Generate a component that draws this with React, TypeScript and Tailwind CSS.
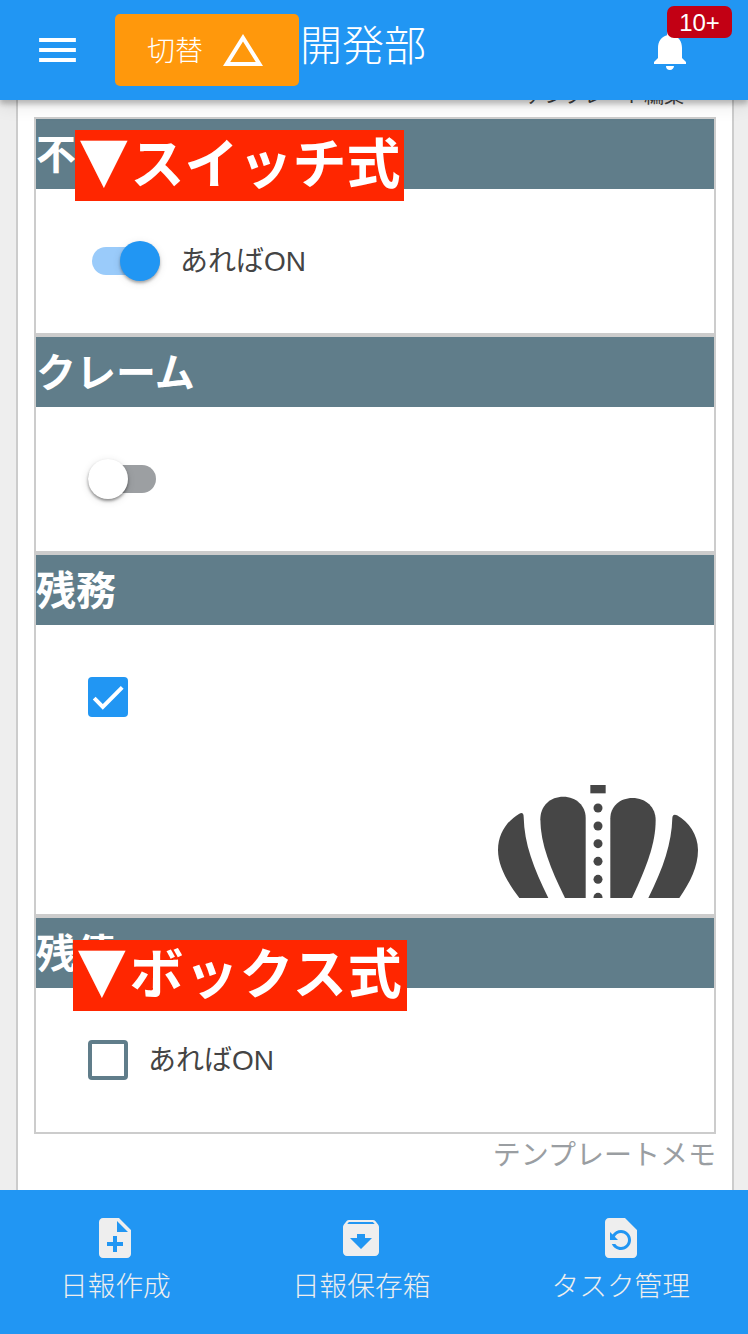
import type { ReactNode } from "react";
import {
  MdArchive,
  MdChangeHistory,
  MdMenu,
  MdNoteAdd,
  MdNotifications,
  MdRestorePage,
} from "react-icons/md";

function Crown() {
  return (
    <svg viewBox="54 45 600 339" className="h-[113px] w-[200px]" fill="#464646">
      <path d="M331 45h46v25h-46z" />
      <circle cx="354" cy="114" r="13.5" />
      <circle cx="354" cy="168" r="13.5" />
      <circle cx="354" cy="221" r="13.5" />
      <circle cx="354" cy="274" r="13.5" />
      <circle cx="354" cy="328" r="13.5" />
      <circle cx="354" cy="382" r="13.5" />
      <path d="M118 384C82 336 54 288 54 240C54 190 83 151 118 131Q131 125 131 141C133 222 160 292 205 384Z" />
      <path d="M255 384C212 298 181 220 181 148C181 107 211 80 250 80C289 80 317 108 317 143V384Z" />
      <path d="M391 384V145C391 110 420 84 457 84C499 84 527 113 527 150C527 220 500 291 456 384Z" />
      <path d="M505 384C551 292 575 220 577 144Q578 131 591 136C626 155 654 194 654 240C654 290 631 336 598 384Z" />
    </svg>
  );
}

function Section({ title, height, children }: { title: string; height: string; children: ReactNode }) {
  return (
    <section>
      <h2 className="h-[70px] bg-[#607d8a] pt-px text-[40px] font-bold leading-[70px] text-white">{title}</h2>
      <div className={`${height} bg-white`}>{children}</div>
    </section>
  );
}

function Toggle({ on }: { on: boolean }) {
  return (
    <span
      className={
        on
          ? "flex h-[28px] w-[68px] items-center justify-end rounded-full bg-[#9acbfa]"
          : "flex h-[28px] w-[68px] items-center justify-start rounded-full bg-[#9c9fa2]"
      }
    >
      <span
        className={
          on
            ? "size-[40px] shrink-0 rounded-full bg-[#2196f3] shadow-[0_2px_3px_rgba(0,0,0,0.3),0_2px_8px_rgba(0,0,0,0.1)]"
            : "size-[40px] shrink-0 rounded-full bg-white shadow-[0_2px_3px_rgba(0,0,0,0.4),0_2px_8px_rgba(0,0,0,0.12)]"
        }
      />
    </span>
  );
}

function NavItem({ icon, label }: { icon: ReactNode; label: string }) {
  return (
    <div className="flex flex-col items-center">
      {icon}
      <span className="mt-[5px] h-10 whitespace-nowrap text-[27.7px] font-light leading-10">{label}</span>
    </div>
  );
}

export default function App() {
  return (
    <div className="relative flex h-[1334px] w-[748px] flex-col overflow-hidden bg-[#eee] font-['Liberation_Sans','Noto_Sans_CJK_JP',sans-serif]">
      <header className="relative z-20 flex h-[100px] shrink-0 items-start bg-[#2196f3] text-white shadow-[0_4px_5px_rgba(0,0,0,0.22),0_4px_18px_rgba(0,0,0,0.12)]">
        <MdMenu className="ml-[33px] mt-[26px] h-[48px] w-[49px]" preserveAspectRatio="none" />
        <button className="ml-[33px] mt-[14px] flex h-[72px] w-[184px] items-center rounded-[5px] bg-[#ff980c] pl-[32px]">
          <span className="pt-[3px] text-[28px] font-light leading-10">切替</span>
          <MdChangeHistory className="ml-[16px] size-[48px]" />
        </button>
        <h1 className="ml-px mt-[17px] text-[42px] font-light leading-[60px]">開発部</h1>
        <div className="relative ml-auto mr-[54px] mt-[26px]">
          <MdNotifications className="size-[48px]" />
          <span className="absolute -top-[20px] left-[21px] flex h-[32px] w-[65px] items-center justify-center rounded-[7px] bg-[#c20014] pt-px text-[24px] leading-none">
            10+
          </span>
        </div>
      </header>

      <main className="ml-4 mr-[14px] h-[1090px] overflow-hidden border-x-2 border-[#ccc] bg-white px-4">
        <div className="-mt-[30px] flex h-[47px] justify-end pr-[32px] pt-[6px]">
          <span className="whitespace-nowrap text-[20px] leading-10 text-[#444]">テンプレート編集</span>
        </div>
        <div className="flex flex-col gap-1 border-2 border-[#ccc] bg-[#ccc]">
          <Section title="不具合" height="h-[144px]">
            <label className="flex items-center pl-[56px] pt-[52px]">
              <Toggle on />
              <span className="ml-[20px] h-10 text-[28px] leading-[42px] text-[#444]">あればON</span>
            </label>
          </Section>
          <Section title="クレーム" height="h-[144px]">
            <div className="flex h-full items-center pl-[52px]">
              <Toggle on={false} />
            </div>
          </Section>
          <Section title="残務" height="h-[289px]">
            <div className="flex h-full flex-col justify-between pb-[16px] pl-[52px] pr-[16px] pt-[52px]">
              <span className="flex size-[40px] items-center justify-center rounded-[4px] bg-[#2196f3]">
                <svg viewBox="0 0 40 40" className="size-[40px]" fill="none" stroke="white" strokeWidth="4">
                  <path d="M6.2 21.2L14.8 29.8L34.2 10.4" />
                </svg>
              </span>
              <div className="flex justify-end">
                <Crown />
              </div>
            </div>
          </Section>
          <Section title="残債" height="h-[144px]">
            <label className="flex items-center pl-[52px] pt-[52px]">
              <span className="size-[40px] rounded-[4px] border-4 border-[#607d8a]" />
              <span className="ml-[20px] h-10 text-[28px] leading-[42px] text-[#444]">あればON</span>
            </label>
          </Section>
        </div>
        <p className="pt-[2px] text-right text-[28px] leading-10 text-[#9a9ea2]">テンプレートメモ</p>
      </main>

      <div className="absolute left-[75px] top-[130px] z-10 h-[71px] w-[329px] whitespace-nowrap bg-[#ff2600] pl-[2px] text-[54px] font-bold leading-[71px] text-white">
        <span className="inline-block -translate-y-[6px] scale-150">▼</span>スイッチ式
      </div>
      <div className="absolute left-[73px] top-[940px] z-10 h-[71px] w-[334px] whitespace-nowrap bg-[#ff2600] pl-[2px] text-[54px] font-bold leading-[71px] text-white">
        <span className="inline-block -translate-y-[6px] scale-150">▼</span>
        <span className="ml-px tracking-[1px]">ボックス式</span>
      </div>

      <nav className="relative z-20 flex h-[144px] shrink-0 justify-between bg-[#2196f3] pl-[60px] pr-[58px] pt-[24px] text-[#eee]">
        <NavItem icon={<MdNoteAdd className="size-[48px]" />} label="日報作成" />
        <NavItem icon={<MdArchive className="size-[48px]" />} label="日報保存箱" />
        <NavItem icon={<MdRestorePage className="size-[48px]" />} label="タスク管理" />
      </nav>
    </div>
  );
}
